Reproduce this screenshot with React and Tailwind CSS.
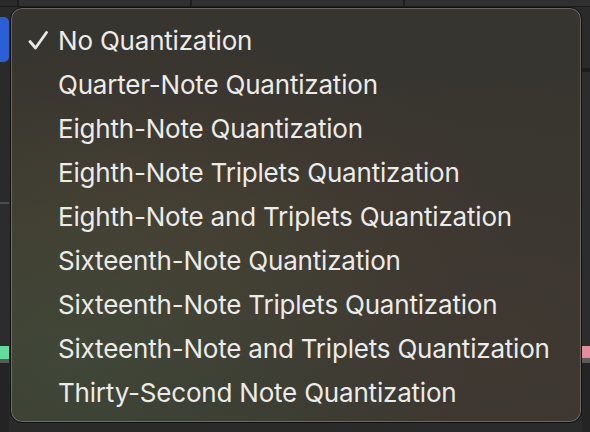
import React from "react";

const items = [
  "No Quantization",
  "Quarter-Note Quantization",
  "Eighth-Note Quantization",
  "Eighth-Note Triplets Quantization",
  "Eighth-Note and Triplets Quantization",
  "Sixteenth-Note Quantization",
  "Sixteenth-Note Triplets Quantization",
  "Sixteenth-Note and Triplets Quantization",
  "Thirty-Second Note Quantization",
];

function Check() {
  return (
    <svg width="20" height="20" viewBox="0 0 20 20" className="shrink-0">
      <path d="M2 10.5 L7.5 17 L18.5 1.5" fill="none" stroke="#e8e8e6" strokeWidth="2.8" strokeLinecap="round" strokeLinejoin="round" />
    </svg>
  );
}

export default function App() {
  return (
    <div className="relative w-[590px] h-[432px] overflow-hidden bg-[#2a2a2a]" style={{ fontFamily: "Inter, 'Noto Sans', sans-serif" }}>
      {/* background app */}
      <div className="flex flex-col h-full">
        <div className="flex h-[7px] border-b border-[#1c1c1c]">
          <div className="w-[19px] bg-[#2a2a2a] border-r-2 border-[#1e1e1e]" />
          <div className="w-[173px] bg-[#303030] border-r-2 border-[#1e1e1e]" />
          <div className="w-[213px] bg-[#303030] border-r-2 border-[#1e1e1e]" />
          <div className="flex-1 bg-[#303030]" />
        </div>
        <div className="flex flex-1 justify-between">
          <div className="w-[9px] flex flex-col">
            <div className="h-[10px]" />
            <div className="h-[45px] bg-[#2c5ed6] rounded-r-[5px]" />
            <div className="h-[140px]" />
            <div className="h-[2px] bg-[#4d4d4d]" />
            <div className="h-[142px] bg-[#2c2c2c]" />
            <div className="h-[13px] bg-[#62dc9c]" />
            <div className="h-[4px] bg-[#5a5a5a]" />
            <div className="flex-1 bg-[#242424]" />
          </div>
          <div className="w-[8px] flex flex-col">
            <div className="h-[61px]" />
            <div className="h-[4px] bg-[#1e1e1e]" />
            <div className="h-[274px] bg-[#2c2c2c]" />
            <div className="h-[12px] bg-[#e28ea0]" />
            <div className="h-[5px] bg-[#5a5a5a]" />
            <div className="flex-1 bg-[#242424]" />
          </div>
        </div>
      </div>

      {/* popup menu */}
      <div className="absolute left-[10px] top-[7px] w-[572px] h-[416px] rounded-[12px] border border-[#101010] shadow-[inset_0_0_0_1px_rgba(255,255,255,0.24)] bg-[#37352f] bg-[radial-gradient(ellipse_at_10%_85%,rgba(70,85,62,0.55),transparent_55%),radial-gradient(ellipse_at_25%_50%,rgba(80,64,48,0.5),transparent_60%),radial-gradient(ellipse_at_85%_80%,rgba(72,60,52,0.5),transparent_60%)] pt-[11px] pb-[7px] overflow-hidden">
        <ul className="flex flex-col">
          {items.map((t, i) => (
            <li key={t} className="h-[44px] flex items-center text-[26px] leading-none text-[#ebebe9] tracking-[-0.2px]">
              <div className="w-[47px] flex justify-end pr-[10px]">{i === 0 ? <Check /> : null}</div>
              <span>{t}</span>
            </li>
          ))}
        </ul>
      </div>
    </div>
  );
}
